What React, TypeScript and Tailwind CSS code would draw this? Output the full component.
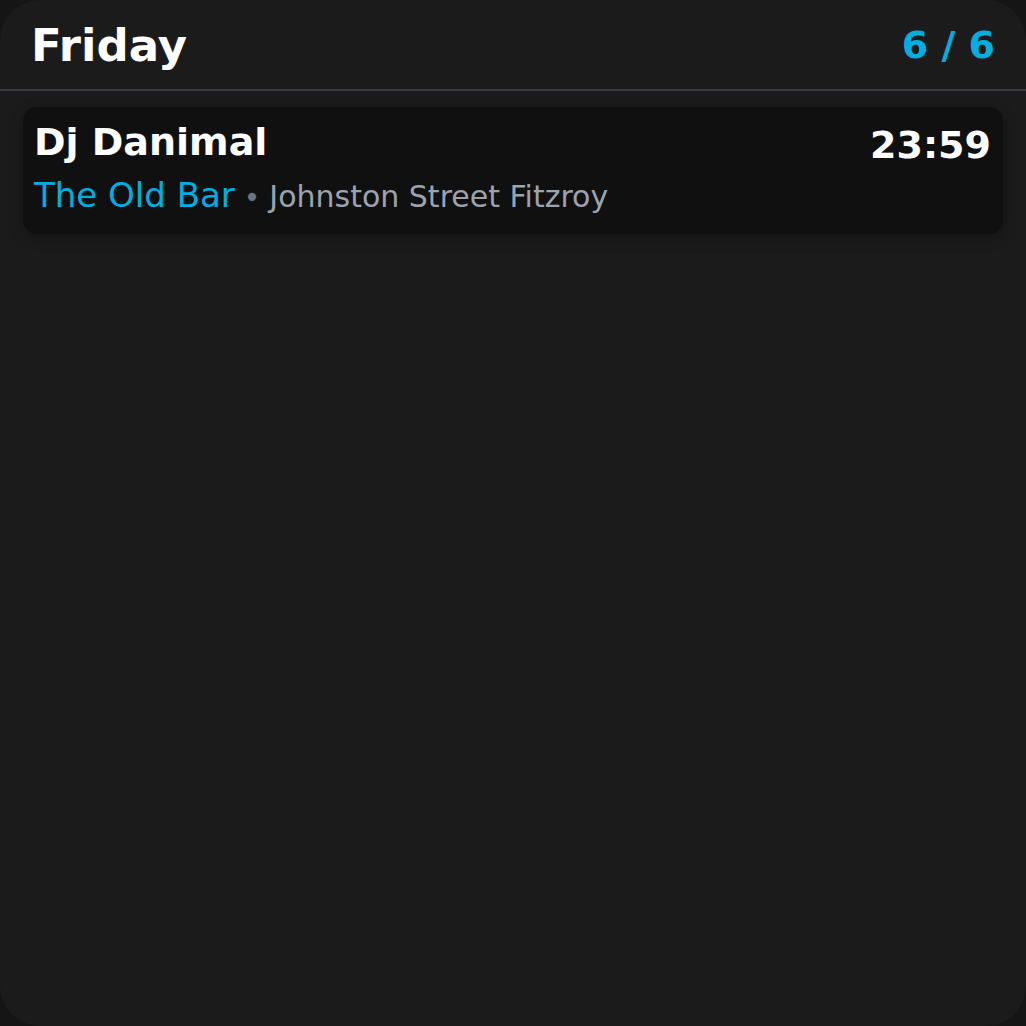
export default function App() {
  return (
    <div className="w-[1026px] h-[1026px] bg-[#151515]" style={{ fontFamily: '"DejaVu Sans", sans-serif' }}>
      <div className="w-full h-full rounded-[40px] bg-[#1b1b1b] flex flex-col overflow-hidden">
        <div className="h-[91px] flex items-center justify-between px-[31px] border-b-2 border-[#363b45] shrink-0">
          <span className="text-[45px] font-bold text-white leading-none pt-[2px]">Friday</span>
          <span className="text-[38px] font-bold text-[#00aee0] leading-none">6 / 6</span>
        </div>
        <div className="px-[23px] pt-[16px]">
          <div className="rounded-[14px] bg-[#101010] h-[127px] pl-[11px] pr-[12px] pt-[13px] shadow-[0_4px_14px_rgba(0,0,0,0.25)]">
            <div className="flex justify-between items-start">
              <span className="text-[38px] font-bold text-white leading-[44px]">Dj Danimal</span>
              <span className="text-[38px] font-bold text-white leading-[44px] pt-[3px]">23:59</span>
            </div>
            <div className="flex items-baseline mt-[8px] leading-[40px]">
              <span className="text-[34px] text-[#00aee0]">The Old Bar</span>
              <span className="text-[28px] text-[#6b7280] mx-[9px]">•</span>
              <span className="text-[30px] text-[#9ca3af]">Johnston Street Fitzroy</span>
            </div>
          </div>
        </div>
      </div>
    </div>
  );
}
